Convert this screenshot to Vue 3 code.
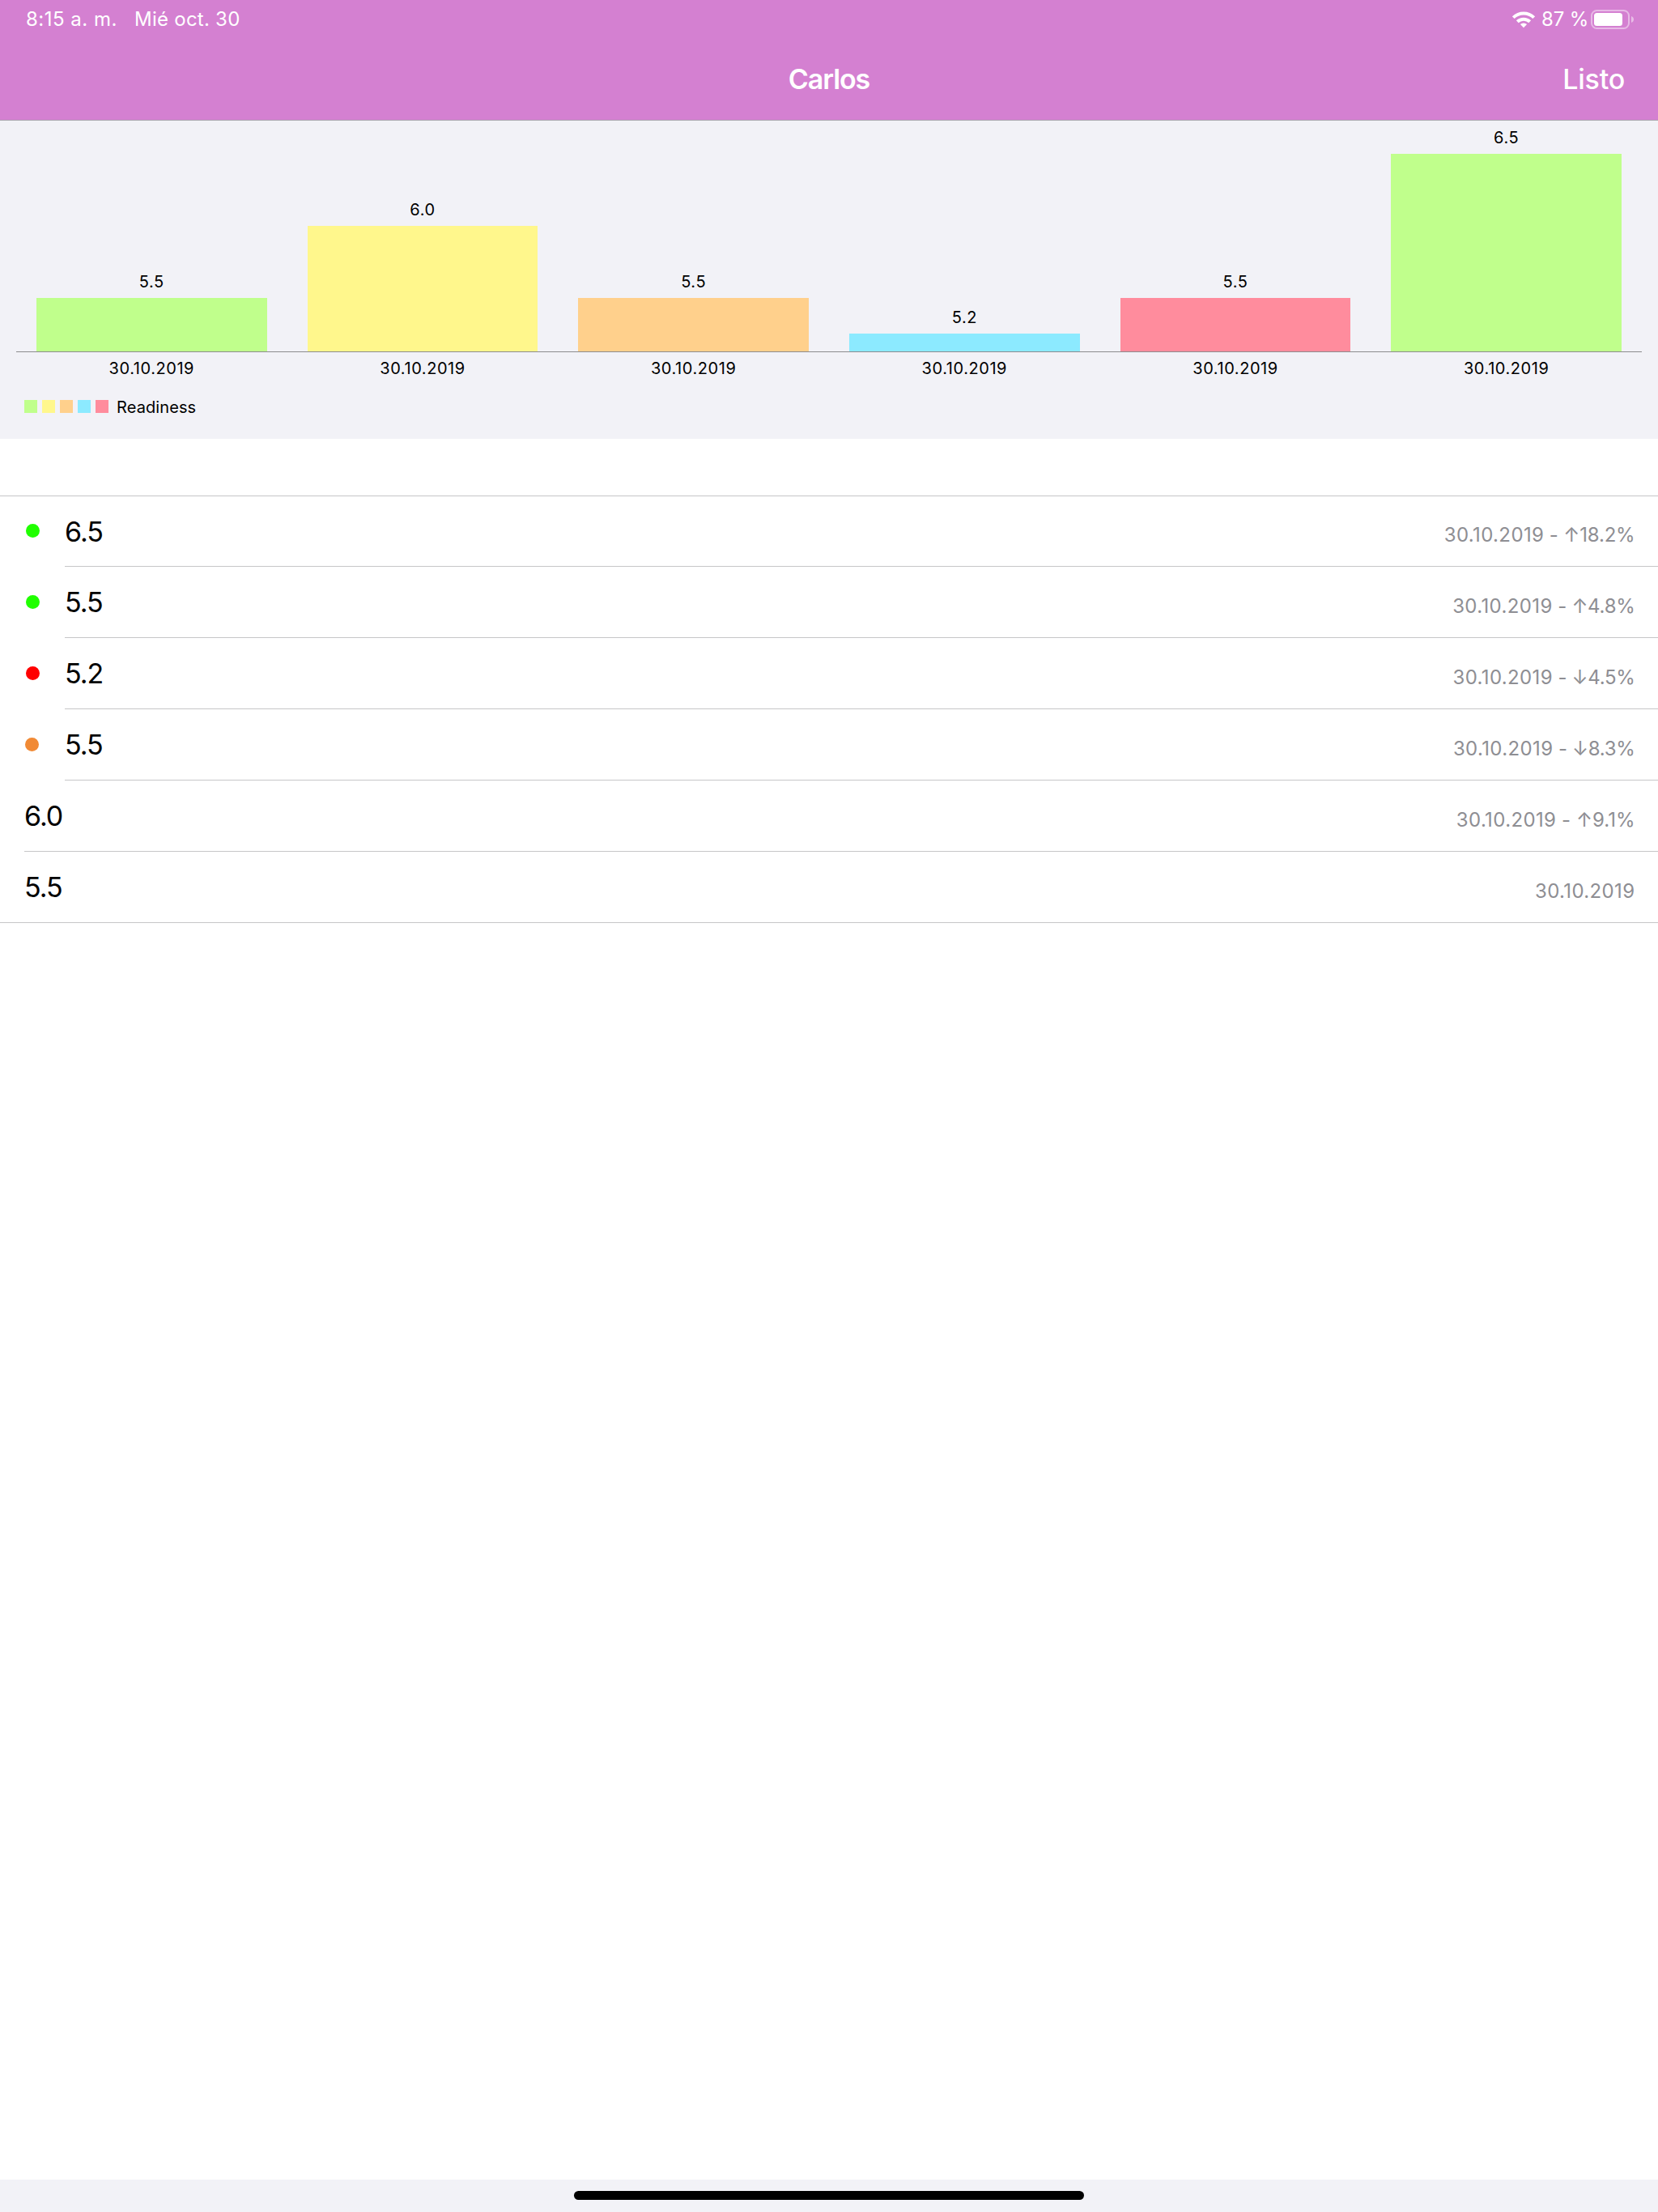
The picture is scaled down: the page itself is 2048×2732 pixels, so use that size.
<script setup>
const bars = [
  { value: '5.5', height: 66.4, color: '#c0ff8c' },
  { value: '6.0', height: 155.2, color: '#fff78c' },
  { value: '5.5', height: 66.4, color: '#ffd08c' },
  { value: '5.2', height: 22.2, color: '#8ceaff' },
  { value: '5.5', height: 66.4, color: '#ff8c9d' },
  { value: '6.5', height: 244, color: '#c0ff8c' },
]
const date = '30.10.2019'
const legend = ['#c0ff8c', '#fff78c', '#ffd08c', '#8ceaff', '#ff8c9d']
const rows = [
  { value: '6.5', change: '↑18.2%', dot: 'green', spacing: -0.17 },
  { value: '5.5', change: '↑4.8%', dot: 'green', spacing: -0.28 },
  { value: '5.2', change: '↓4.5%', dot: 'red', spacing: -0.31 },
  { value: '5.5', change: '↓8.3%', dot: 'orange', spacing: -0.31 },
  { value: '6.0', change: '↑9.1%', spacing: 0.02 },
  { value: '5.5' },
]
</script>

<template>
  <div class="screen">
    <header class="header">
      <div class="status">
        <span class="time">8:15 a. m.</span>
        <span class="day">Mié oct. 30</span>
        <svg class="wifi" width="28" height="21" viewBox="0 0 28 21">
          <g fill="none" stroke="#fff" stroke-width="4">
            <path d="M1.3 7.7A18 18 0 0 1 26.7 7.7" />
            <path d="M6.3 12.8A11 11 0 0 1 21.7 12.8" />
          </g>
          <path d="M14 20.2L9.9 16.1a5.8 5.8 0 0 1 8.2 0z" fill="#fff" />
        </svg>
        <span class="percent">87 %</span>
        <svg class="battery" width="54" height="24" viewBox="0 0 54 24">
          <rect x="1" y="1" width="46" height="22" rx="6.5" fill="none" stroke="#fff" stroke-opacity=".45" stroke-width="2" />
          <rect x="4" y="4" width="35" height="16" rx="3.5" fill="#fff" />
          <path d="M50 8q3 1.2 3 4t-3 4z" fill="#fff" fill-opacity=".48" />
        </svg>
      </div>
      <nav class="nav">
        <span></span>
        <h1 class="title">Carlos</h1>
        <span class="done">Listo</span>
      </nav>
    </header>

    <section class="chart">
      <div class="plot">
        <div v-for="(bar, i) in bars" :key="i" class="column">
          <span class="label">{{ bar.value }}</span>
          <div class="bar" :style="{ height: bar.height + 'px', background: bar.color }"></div>
        </div>
      </div>
      <div class="axis">
        <span v-for="(bar, i) in bars" :key="i" class="tick">{{ date }}</span>
      </div>
      <div class="legend">
        <i v-for="color in legend" :key="color" class="swatch" :style="{ background: color }"></i>
        <span class="legend-text">Readiness</span>
      </div>
    </section>

    <ul class="list">
      <li v-for="(row, i) in rows" :key="i" class="row">
        <i v-if="row.dot" class="dot" :class="row.dot"></i>
        <div class="cell">
          <span class="value">{{ row.value }}</span>
          <span class="detail"><span class="date">{{ date }}</span><span v-if="row.change" class="change" :style="{ letterSpacing: row.spacing + 'px' }">{{ ' - ' + row.change }}</span></span>
        </div>
      </li>
    </ul>

    <footer class="footer"><div class="indicator"></div></footer>
  </div>
</template>

<style>
body {
  margin: 0;
}
</style>

<style scoped>
.screen {
  display: flex;
  flex-direction: column;
  width: 2048px;
  height: 2732px;
  background: #fff;
  color: #000;
  font-family: Inter, sans-serif;
  font-kerning: normal;
}
.header {
  height: 148px;
  background: #d480d1;
  color: #fff;
  border-bottom: 1px solid #a9a5ae;
}
.status {
  display: flex;
  align-items: flex-start;
  height: 48px;
  padding-left: 32px;
  font-size: 24px;
  line-height: 47px;
  white-space: nowrap;
}
.time {
  width: 134px;
  letter-spacing: 0.5px;
}
.day {
  letter-spacing: 0.25px;
}
.wifi {
  margin: 13.5px 8px 0 auto;
}
.percent {
  width: 61px;
  letter-spacing: -0.15px;
}
.battery {
  margin: 12px 29px 0 0;
}
.nav {
  display: grid;
  grid-template-columns: 1fr auto 1fr;
  align-items: center;
  height: 100px;
  padding: 0 41px;
  font-size: 34px;
  line-height: 44px;
}
.title {
  margin: 0;
  font-size: 34px;
  font-weight: 600;
  letter-spacing: -1.08px;
}
.done {
  justify-self: end;
  font-weight: 500;
  letter-spacing: -0.21px;
}
.chart {
  height: 393px;
  background: #f2f2f7;
  font-size: 20px;
  line-height: 24px;
}
.plot {
  display: flex;
  align-items: flex-end;
  height: 285px;
  margin: 0 20px;
  border-bottom: 1px solid #8c8c8e;
}
.column {
  display: flex;
  flex: 1;
  flex-direction: column;
  align-items: center;
}
.label {
  margin-bottom: 8px;
  letter-spacing: 0.6px;
}
.bar {
  width: 85%;
}
.axis {
  display: flex;
  margin: 8px 20px 0;
}
.tick {
  flex: 1;
  text-align: center;
  letter-spacing: 0.56px;
}
.legend {
  display: flex;
  align-items: center;
  gap: 6px;
  height: 24px;
  margin: 23px 0 0 30px;
}
.swatch {
  width: 16px;
  height: 16px;
}
.legend-text {
  padding-top: 2px;
  margin-left: 4px;
  letter-spacing: 0.1px;
}
.list {
  flex: 1;
  margin: 70px 0 0;
  padding: 0;
  list-style: none;
}
.row {
  display: flex;
  align-items: center;
  height: 88px;
  padding-left: 30px;
}
.row:first-child {
  border-top: 1px solid #c6c6c8;
  height: 87px;
}
.row:last-child {
  padding-left: 0;
  border-bottom: 1px solid #c6c6c8;
  height: 87px;
}
.row:last-child .cell {
  padding-left: 30px;
  border-bottom: 0;
}
.dot {
  width: 17px;
  height: 17px;
  margin: 0 31px 2px 2px;
  border-radius: 50%;
}
.green {
  background: #20ff00;
}
.red {
  background: #f00;
}
.orange {
  margin: 0 32px 2px 1px;
  background: #f18a35;
}
.cell {
  box-sizing: border-box;
  display: flex;
  flex: 1;
  align-items: center;
  justify-content: space-between;
  height: 100%;
  padding-right: 28.5px;
  border-bottom: 1px solid #c6c6c8;
}
.value {
  padding-top: 1px;
  font-size: 34px;
  line-height: 44px;
  letter-spacing: -1.05px;
}
.detail {
  padding-top: 10px;
  color: #8e8e93;
  font-size: 24px;
  line-height: 30px;
  white-space: pre;
}
.date {
  letter-spacing: 0.37px;
}
.footer {
  height: 40px;
  padding-top: 14px;
  box-sizing: border-box;
  background: #f2f2f7;
}
.indicator {
  width: 630px;
  height: 11px;
  margin: 0 auto;
  border-radius: 6px;
  background: #000;
}
</style>
